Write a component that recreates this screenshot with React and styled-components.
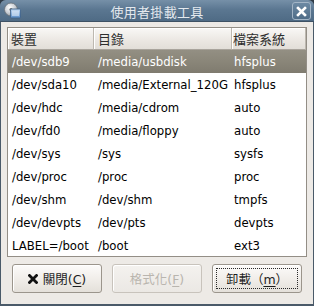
import React from "react";
import styled, { createGlobalStyle, css } from "styled-components";

const GlobalStyle = createGlobalStyle`
  html, body {
    margin: 0;
    padding: 0;
    background: #2f3b46;
  }
  * {
    box-sizing: border-box;
  }
`;

const LATIN = `"DejaVu Sans", "Noto Sans CJK TC", sans-serif`;
const CJK = `"DejaVu Sans", "Noto Sans CJK TC", sans-serif`;

const Window = styled.div`
  width: 314px;
  height: 306px;
  display: flex;
  flex-direction: column;
  border-radius: 6px 6px 0 0;
  overflow: hidden;
  background: #4a5a69;
`;

const TitleBar = styled.div`
  height: 22px;
  flex: none;
  position: relative;
  display: flex;
  align-items: center;
  justify-content: center;
  background: linear-gradient(#7690a8, #5b7791 45%, #4f6b85);
  border-bottom: 1px solid #3e5265;
`;

const TitleIcon = styled.svg`
  position: absolute;
  left: 4px;
  top: 2px;
`;

const TitleText = styled.span`
  font-family: ${CJK};
  font-size: 13px;
  color: #e4e9ee;
  letter-spacing: 0.3px;
  margin-top: 1px;
`;

const CloseBox = styled.div`
  position: absolute;
  right: 3px;
  top: 2px;
  width: 19px;
  height: 18px;
  border: 1px solid #a3b5c6;
  border-radius: 3px;
  background: linear-gradient(#6c89a3, #4f6d88);
  display: flex;
  align-items: center;
  justify-content: center;
`;

const Body = styled.div`
  flex: 1;
  margin: 0 1px 2px 1px;
  background: #edeae6;
  padding: 5px 6px 0 6px;
  display: flex;
  flex-direction: column;
`;

const Frame = styled.div`
  height: 230px;
  border: 1px solid #938e86;
  background: #ffffff;
  overflow: hidden;
  display: grid;
  grid-template-columns: 86px 138px 1fr;
  grid-auto-rows: 23px;
  grid-template-rows: 22px;
`;

const HeadCell = styled.div`
  display: flex;
  align-items: center;
  padding-left: ${({ $pad }) => $pad}px;
  font-family: ${CJK};
  font-size: 13px;
  color: #2e2e2e;
  background: linear-gradient(#f9f8f6, #ebe7e2 60%, #e2ded8);
  border-right: 1px solid #bdb8b0;
  border-bottom: 1px solid #a9a49c;
  box-shadow: inset 1px 1px 0 #ffffff;
  &:last-of-type {
    border-right: none;
  }
`;

const Cell = styled.div`
  display: flex;
  align-items: center;
  padding-left: ${({ $pad }) => $pad}px;
  font-family: ${LATIN};
  font-size: 11.7px;
  white-space: nowrap;
  color: #000000;
  ${({ $selected }) =>
    $selected &&
    css`
      color: #ffffff;
      background: linear-gradient(#938f83, #8a8679 50%, #7f7b6f);
    `}
`;

const ButtonRow = styled.div`
  display: flex;
  gap: 10px;
  padding: 7px 0 0 5px;
`;

const Button = styled.div`
  width: 90px;
  height: 29px;
  position: relative;
  display: flex;
  align-items: center;
  justify-content: center;
  gap: 5px;
  border: 1px solid #9b958c;
  border-radius: 3px;
  background: linear-gradient(#fcfbfa, #f1eeea 50%, #e4e0da);
  box-shadow: inset 1px 1px 0 #ffffff;
  font-family: ${CJK};
  font-size: 12.5px;
  color: #1e1e1e;
  ${({ $disabled }) =>
    $disabled &&
    css`
      color: #b9b5ae;
      border-color: #c8c3bc;
      background: linear-gradient(#f4f2ef, #ebe8e4);
    `}
`;

const FocusRing = styled.div`
  position: absolute;
  inset: 3px;
  border: 1px dotted #2a2a2a;
`;

const Key = styled.u`
  text-underline-offset: 2px;
`;

const rows = [
  ["/dev/sdb9", "/media/usbdisk", "hfsplus"],
  ["/dev/sda10", "/media/External_120G", "hfsplus"],
  ["/dev/hdc", "/media/cdrom", "auto"],
  ["/dev/fd0", "/media/floppy", "auto"],
  ["/dev/sys", "/sys", "sysfs"],
  ["/dev/proc", "/proc", "proc"],
  ["/dev/shm", "/dev/shm", "tmpfs"],
  ["/dev/devpts", "/dev/pts", "devpts"],
  ["LABEL=/boot", "/boot", "ext3"],
];

const pads = [4, 4, 2];

const App = () => {
  return (
    <>
      <GlobalStyle />
      <Window>
        <TitleBar>
          <TitleIcon width="18" height="18" viewBox="0 0 18 18">
            <defs>
              <radialGradient id="cd" cx="0.4" cy="0.35" r="0.7">
                <stop offset="0" stopColor="#ffffff" />
                <stop offset="0.6" stopColor="#c9ced4" />
                <stop offset="1" stopColor="#8e959c" />
              </radialGradient>
              <linearGradient id="scr" x1="0" y1="0" x2="0" y2="1">
                <stop offset="0" stopColor="#bcd6f2" />
                <stop offset="1" stopColor="#5d8fc8" />
              </linearGradient>
            </defs>
            <circle cx="7" cy="7.5" r="6.5" fill="url(#cd)" stroke="#6b7278" strokeWidth="0.8" />
            <circle cx="7" cy="7.5" r="1.6" fill="#5e6870" />
            <rect x="6.5" y="7" width="10" height="9" rx="1" fill="url(#scr)" stroke="#3e5f86" strokeWidth="0.8" />
            <rect x="8" y="8.5" width="7" height="5.5" fill="#e8f1fb" opacity="0.55" />
          </TitleIcon>
          <TitleText>使用者掛載工具</TitleText>
          <CloseBox>
            <svg width="11" height="11" viewBox="0 0 11 11">
              <path d="M2 2 L9 9 M9 2 L2 9" stroke="#ffffff" strokeWidth="2.6" strokeLinecap="square" />
            </svg>
          </CloseBox>
        </TitleBar>
        <Body>
          <Frame>
            <HeadCell $pad={3}>裝置</HeadCell>
            <HeadCell $pad={4}>目錄</HeadCell>
            <HeadCell $pad={1}>檔案系統</HeadCell>
            {rows.map((row, i) =>
              row.map((text, j) => (
                <Cell key={`${i}-${j}`} $pad={pads[j]} $selected={i === 0}>
                  {text}
                </Cell>
              ))
            )}
          </Frame>
          <ButtonRow>
            <Button>
              <svg width="10" height="10" viewBox="0 0 10 10">
                <path d="M1.5 1.5 L8.5 8.5 M8.5 1.5 L1.5 8.5" stroke="#111111" strokeWidth="2.8" strokeLinecap="square" />
              </svg>
              <span>
                關閉(<Key>C</Key>)
              </span>
            </Button>
            <Button $disabled>
              <span>
                格式化(<Key>F</Key>)
              </span>
            </Button>
            <Button>
              <FocusRing />
              <span>
                卸載（<Key>m</Key>）
              </span>
            </Button>
          </ButtonRow>
        </Body>
      </Window>
    </>
  );
};

export default App;
